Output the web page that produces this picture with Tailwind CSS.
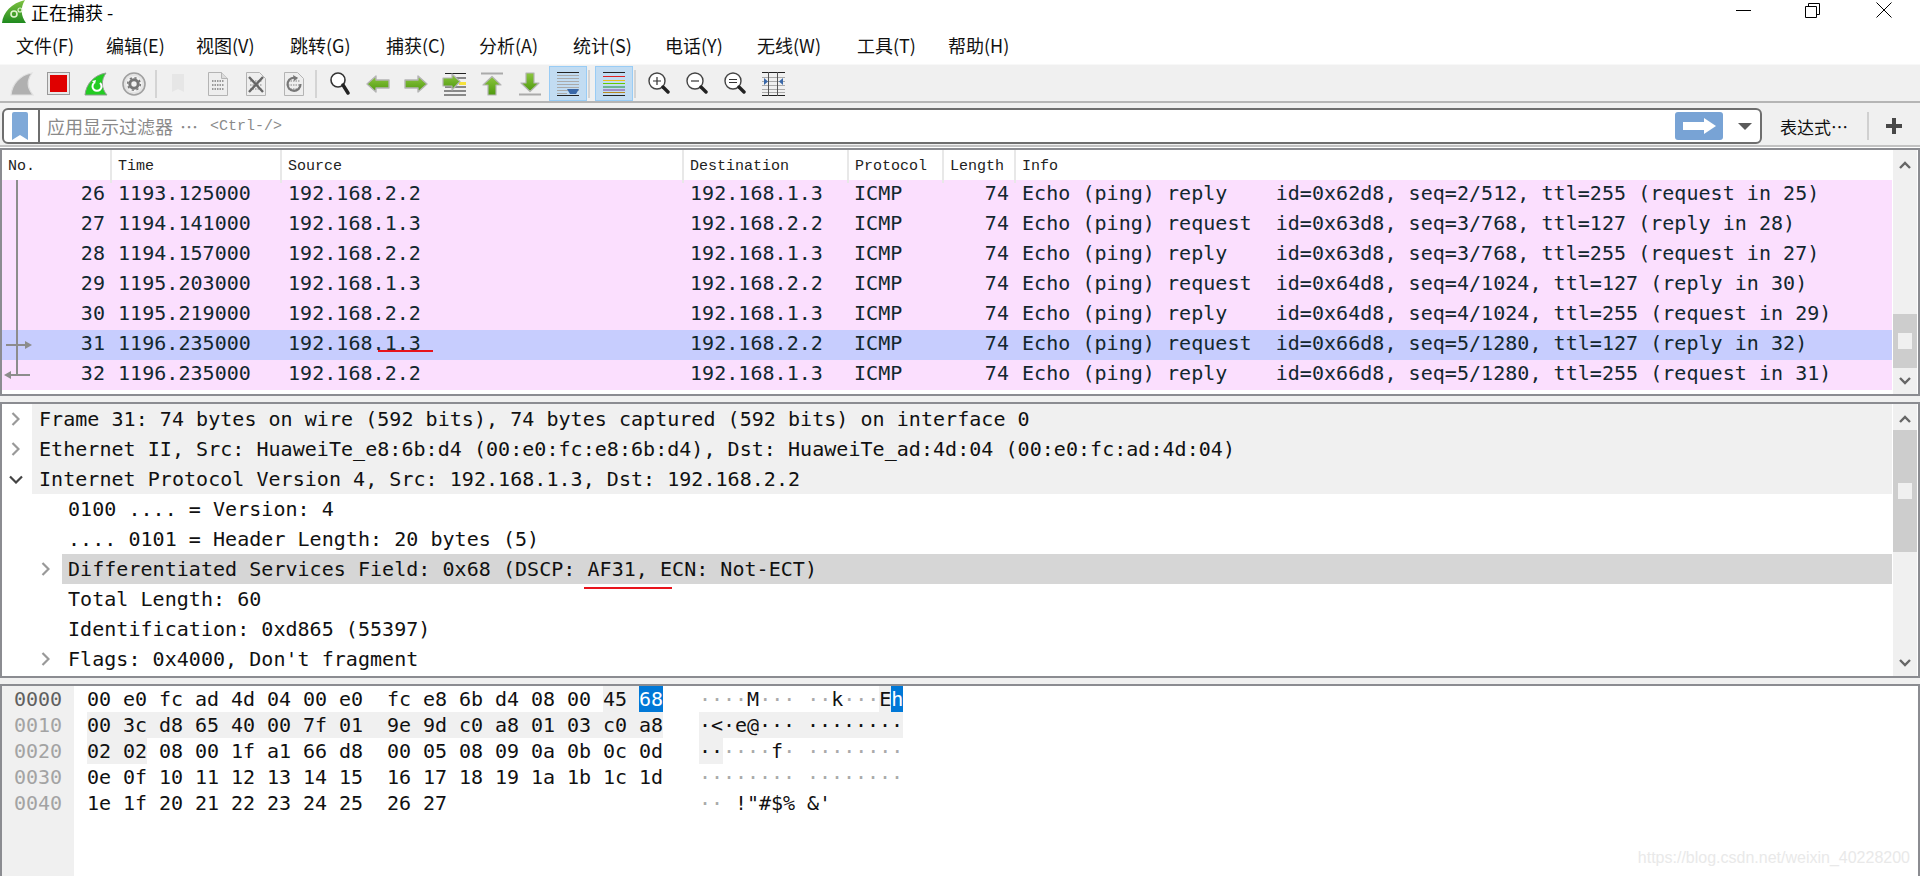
<!DOCTYPE html>
<html lang="zh">

<head>
    <meta charset="UTF-8">
    <title>正在捕获 -</title>
    <script src="https://cdn.jsdelivr.net/npm/@tailwindcss/browser@4"></script>
</head>

<body class="bg-white overflow-hidden">
    <div class="relative flex flex-col h-[876px] w-[1920px] overflow-hidden bg-white text-black font-['Noto_Sans_CJK_SC',sans-serif]">

        <!-- title bar -->
        <div class="flex items-start h-[28px] shrink-0">
            <svg class="ml-[2px] w-[24px] h-[24px]" viewBox="0 0 24 24">
                <defs>
                    <linearGradient id="logoFill" x1="0" y1="0" x2="0" y2="1">
                        <stop offset="0" stop-color="#7fc241" />
                        <stop offset="1" stop-color="#1f8a1f" />
                    </linearGradient>
                    <linearGradient id="arrowFill" x1="0" y1="0" x2="0" y2="1">
                        <stop offset="0" stop-color="#8cc63f" />
                        <stop offset="1" stop-color="#4f9a0f" />
                    </linearGradient>
                </defs>
                <path d="M0 23 C1 12 10 3 23 0 C18 8 19 16 24 23 Z" fill="url(#logoFill)" />
                <circle cx="12" cy="14" r="3" fill="none" stroke="#dff3cf" stroke-width="1.6" />
                <circle cx="18" cy="10" r="2" fill="none" stroke="#dff3cf" stroke-width="1.2" />
            </svg>
            <span class="ml-[5px] text-[18px] leading-[24px]">正在捕获 -</span>
            <div class="ml-auto flex items-start h-full">
                <svg class="w-[15px] h-[15px] mt-[3px] mr-[54px]" viewBox="0 0 15 15"><path d="M0 7.500H15" stroke="#000" fill="none" /></svg>
                <svg class="w-[15px] h-[15px] mt-[3px] mr-[56px]" viewBox="0 0 15 15"><path d="M.5 3.500h11v11H.5zM3.500 3V.5h11v11H12" stroke="#000" fill="none" /></svg>
                <svg class="w-[16px] h-[16px] mt-[2px] mr-[28px]" viewBox="0 0 16 16"><path d="M.5.5l15 15M15.500.5l-15 15" stroke="#000" fill="none" /></svg>
            </div>
        </div>

        <!-- menu bar -->
        <div class="flex items-center h-[35px] pl-[16px] pb-[1px] shrink-0 text-[18px] leading-none text-[#111]">
            <span class="w-[90px] shrink-0">文件(F)</span>
            <span class="w-[90px] shrink-0">编辑(E)</span>
            <span class="w-[94px] shrink-0">视图(V)</span>
            <span class="w-[96px] shrink-0">跳转(G)</span>
            <span class="w-[93px] shrink-0">捕获(C)</span>
            <span class="w-[94px] shrink-0">分析(A)</span>
            <span class="w-[92px] shrink-0">统计(S)</span>
            <span class="w-[92px] shrink-0">电话(Y)</span>
            <span class="w-[100px] shrink-0">无线(W)</span>
            <span class="w-[91px] shrink-0">工具(T)</span>
            <span class="shrink-0">帮助(H)</span>
        </div>

        <!-- main toolbar -->
        <div class="flex items-center h-[39px] mt-[1px] pl-[4px] pt-[1px] shrink-0 bg-[#f0f0f0] border-t border-t-[#f8f8f8] border-b-2 border-b-[#b5b5b5]">
            <span class="flex items-center justify-center w-[36px] h-full">
                <svg class="w-[24px] h-[24px]" viewBox="0 0 24 24"><path d="M1 23 C2 12 10 3 22 1 C17 8 17 16 23 23 Z" fill="#b0b0b0" stroke="#e0e0e0" stroke-width="1.2" /></svg>
            </span>
            <span class="flex items-center justify-center w-[36px] h-full">
                <svg class="w-[23px] h-[23px]" viewBox="0 0 23 23"><rect x=".5" y=".5" width="22" height="22" fill="#e8e8e8" stroke="#999" /><rect x="3" y="3" width="17" height="17" fill="#e00000" /></svg>
            </span>
            <span class="flex items-center justify-center w-[38px] h-full ml-[1px]">
                <svg class="w-[24px] h-[24px]" viewBox="0 0 24 24"><path d="M1 23 C2 12 10 3 22 1 C17 8 17 16 23 23 Z" fill="#22cc22" stroke="#8f9f8f" stroke-width="1" /><path d="M16 11 A4.500 4.500 0 1 1 10 11" fill="none" stroke="#fff" stroke-width="2" /><path d="M8 9l4-1-1 4z" fill="#fff" /></svg>
            </span>
            <span class="flex items-center justify-center w-[38px] h-full">
                <svg class="w-[24px] h-[24px]" viewBox="0 0 24 24"><circle cx="12" cy="12" r="11" fill="#e4e4e4" stroke="#a0a0a0" stroke-width="1.6" /><circle cx="12" cy="12" r="8" fill="#f2f2f2" /><circle cx="12" cy="12" r="4.200" fill="none" stroke="#777" stroke-width="3" /><circle cx="12" cy="12" r="6.300" fill="none" stroke="#777" stroke-width="1.6" stroke-dasharray="2.2 2.7" /></svg>
            </span>
            <span class="w-[2px] h-[28px] ml-[2px] mr-[3px] bg-[#d4d4d4]"></span>
            <span class="flex items-center justify-center w-[38px] h-full">
                <svg class="w-[16px] h-[24px]" viewBox="0 0 16 24"><path d="M1 2h12v18l-6-3-6 3z" fill="#e6e6e6" /></svg>
            </span>
            <span class="flex items-center justify-center w-[38px] h-full ml-[1px]">
                <svg class="w-[20px] h-[24px]" viewBox="0 0 20 24"><path d="M.5.5h13l6 6v17H.5z" fill="#eee" stroke="#b4b4b4" /><path d="M13.500.5v6h6" fill="#dcdcdc" stroke="#b4b4b4" /><path d="M4 9h12M4 13h12M4 17h12" stroke="#999" stroke-width="2" stroke-dasharray="1.5 1" fill="none" /></svg>
            </span>
            <span class="flex items-center justify-center w-[38px] h-full">
                <svg class="w-[20px] h-[24px]" viewBox="0 0 20 24"><path d="M.5.5h13l6 6v17H.5z" fill="#eee" stroke="#b4b4b4" /><path d="M4 9h12M4 13h12M4 17h12" stroke="#b8b8b8" stroke-width="2" stroke-dasharray="1.5 1" fill="none" /><path d="M3 5l14 15M17 5L3 20" stroke="#666" stroke-width="2.4" fill="none" /></svg>
            </span>
            <span class="flex items-center justify-center w-[38px] h-full">
                <svg class="w-[20px] h-[24px]" viewBox="0 0 20 24"><path d="M.5.5h13l6 6v17H.5z" fill="#eee" stroke="#b4b4b4" /><path d="M4 9h12M4 13h12M4 17h12" stroke="#b8b8b8" stroke-width="2" stroke-dasharray="1.5 1" fill="none" /><path d="M13 6.500A6.500 6.500 0 1 0 16.500 12" fill="none" stroke="#777" stroke-width="2.2" /><path d="M9 3l5 3-4 3z" fill="#777" /></svg>
            </span>
            <span class="w-[2px] h-[28px] ml-[2px] mr-[4px] bg-[#d4d4d4]"></span>
            <span class="flex items-center justify-center w-[38px] h-full">
                <svg class="w-[20px] h-[24px]" viewBox="0 0 20 24"><circle cx="8" cy="8" r="7" fill="#fff" stroke="#333" stroke-width="1.6" /><path d="M13 13l5 8" stroke="#222" stroke-width="3.4" stroke-linecap="round" /></svg>
            </span>
            <span class="flex items-center justify-center w-[38px] h-full">
                <svg class="w-[24px] h-[20px]" viewBox="0 0 24 20"><path d="M1 10L10 2v4h13v8H10v4z" fill="url(#arrowFill)" stroke="#b4b4b4" stroke-width="1.4" stroke-linejoin="round" /></svg>
            </span>
            <span class="flex items-center justify-center w-[38px] h-full">
                <svg class="w-[24px] h-[20px]" viewBox="0 0 24 20"><path d="M23 10L14 2v4H1v8h13v4z" fill="url(#arrowFill)" stroke="#b4b4b4" stroke-width="1.4" stroke-linejoin="round" /></svg>
            </span>
            <span class="flex items-center justify-center w-[38px] h-full">
                <svg class="w-[24px] h-[24px]" viewBox="0 0 24 24"><path d="M3 1.500h21M10 6h14M15 10.500h9M3 15h21M2 19h22M2 23h22" stroke="#222" stroke-width="1.2" fill="none" /><path d="M17 10h7v3h-7z" fill="#f6e23c" /><path d="M18 9.500L10 2v4H1v8h9v4z" fill="url(#arrowFill)" stroke="#b4b4b4" stroke-width="1.2" stroke-linejoin="round" /></svg>
            </span>
            <span class="flex items-center justify-center w-[38px] h-full">
                <svg class="w-[22px] h-[24px]" viewBox="0 0 22 24"><path d="M0 1.500h22" stroke="#aaa" stroke-width="2" /><path d="M11 4.500L2 13h5v10h8V13h5z" fill="url(#arrowFill)" stroke="#b4b4b4" stroke-width="1.2" stroke-linejoin="round" /></svg>
            </span>
            <span class="flex items-center justify-center w-[38px] h-full">
                <svg class="w-[22px] h-[24px]" viewBox="0 0 22 24"><path d="M0 22.500h22" stroke="#aaa" stroke-width="2" /><path d="M11 19.500L2 11h5V1h8v10h5z" fill="url(#arrowFill)" stroke="#b4b4b4" stroke-width="1.2" stroke-linejoin="round" /></svg>
            </span>
            <span class="flex items-center justify-center w-[38px] h-full bg-[#c2dcf2] border border-[#99ccf5]">
                <svg class="w-[22px] h-[24px]" viewBox="0 0 22 24"><path d="M0 .5h22M0 23.500h22" stroke="#222" /><path d="M0 3.500h22M0 6.500h22M0 9.500h22M0 12.500h22M0 15.500h22M0 18.500h22M0 21.500h10" stroke="#aaa" /><path d="M10 17h12l-3 5h-6z" fill="#3a68a8" /></svg>
            </span>
            <span class="w-[2px] h-[28px] ml-[1px] mr-[5px] bg-[#d4d4d4]"></span>
            <span class="flex items-center justify-center w-[38px] h-full bg-[#c2dcf2] border border-[#99ccf5]">
                <svg class="w-[22px] h-[24px]" viewBox="0 0 22 24"><path d="M0 .5h22" stroke="#222" /><path d="M0 4.500h22" stroke="#e02020" /><path d="M0 8.500h22" stroke="#e8c020" /><path d="M0 11.500h22" stroke="#66cc00" /><path d="M0 15h22" stroke="#1c8c30" /><path d="M0 18h22" stroke="#8040a0" /><path d="M0 20.500h22" stroke="#b88820" /><path d="M0 23.500h22" stroke="#222" /></svg>
            </span>
            <span class="w-[2px] h-[28px] ml-[1px] mr-[4px] bg-[#d4d4d4]"></span>
            <span class="flex items-center justify-center w-[38px] h-full">
                <svg class="w-[22px] h-[24px]" viewBox="0 0 22 24"><circle cx="9" cy="9" r="8" fill="#fff" stroke="#444" stroke-width="1.4" /><path d="M5 9h8M9 5v8" stroke="#333" stroke-width="1.2" /><path d="M15 15l5 5" stroke="#222" stroke-width="3.4" stroke-linecap="round" /></svg>
            </span>
            <span class="flex items-center justify-center w-[38px] h-full">
                <svg class="w-[22px] h-[24px]" viewBox="0 0 22 24"><circle cx="9" cy="9" r="8" fill="#fff" stroke="#444" stroke-width="1.4" /><path d="M5 9h8" stroke="#333" stroke-width="1.2" /><path d="M15 15l5 5" stroke="#222" stroke-width="3.4" stroke-linecap="round" /></svg>
            </span>
            <span class="flex items-center justify-center w-[38px] h-full">
                <svg class="w-[22px] h-[24px]" viewBox="0 0 22 24"><circle cx="9" cy="9" r="8" fill="#fff" stroke="#444" stroke-width="1.4" /><path d="M5 7.500h8M5 10.500h8" stroke="#333" stroke-width="1.2" /><path d="M15 15l5 5" stroke="#222" stroke-width="3.4" stroke-linecap="round" /></svg>
            </span>
            <span class="flex items-center justify-center w-[38px] h-full">
                <svg class="w-[23px] h-[24px]" viewBox="0 0 23 24"><path d="M0 .5h23M0 23.500h23" stroke="#222" /><path d="M0 5.500h23M0 9.500h23M0 13.500h23M0 17.500h23M0 20.500h23" stroke="#aaa" /><path d="M6.500 0v24M15.500 0v24" stroke="#555" /><path d="M2 6l4 3.500-4 3.500zM21 6l-4 3.500 4 3.500z" fill="#3a68a8" /></svg>
            </span>
        </div>

        <!-- display filter bar -->
        <div class="flex items-center h-[44px] pl-[2px] pt-[4px] shrink-0 bg-[#f0f0f0] border-b-2 border-b-[#c2c2c2]">
            <div class="flex items-center w-[1760px] h-[36px] bg-white border-2 border-[#6e6e6e] rounded-[6px]">
                <svg class="ml-[8px] w-[16px] h-[28px]" viewBox="0 0 16 28"><path d="M0 2a2 2 0 0 1 2-2h12a2 2 0 0 1 2 2v26l-8-5-8 5z" fill="#7fa9d8" /></svg>
                <span class="w-[2px] h-[32px] ml-[10px] bg-[#6e6e6e]"></span>
                <span class="ml-[7px] text-[18px] leading-none text-[#8a8a8a]">应用显示过滤器</span>
                <span class="ml-[7px] text-[18px] leading-none text-[#8a8a8a]">…</span>
                <span class="ml-[12px] text-[15px] leading-none text-[#8a8a8a] font-['Liberation_Mono',monospace]">&lt;Ctrl-/&gt;</span>
                <span class="ml-auto flex items-center justify-center w-[48px] h-[28px] bg-[#78a3d5] rounded-[3px]">
                    <svg class="w-[33px] h-[16px]" viewBox="0 0 33 16"><path d="M0 4h21V0l12 8-12 8v-4H0z" fill="#fff" /></svg>
                </span>
                <svg class="ml-[15px] mr-[8px] w-[14px] h-[7px]" viewBox="0 0 14 7"><path d="M0 0h14L7 7z" fill="#5a5a5a" /></svg>
            </div>
            <span class="ml-[18px] text-[17px] leading-none text-[#111]">表达式…</span>
            <span class="w-[2px] h-[28px] ml-[19px] bg-[#d0d0d0]"></span>
            <svg class="ml-[17px] w-[16px] h-[16px]" viewBox="0 0 16 16"><path d="M6 0h4v6h6v4h-6v6H6v-6H0V6h6z" fill="#484848" /></svg>
        </div>

        <!-- packet list -->
        <div class="flex h-[248px] mt-[1px] shrink-0 bg-white border-2 border-[#8b8c91] font-['DejaVu_Sans_Mono',monospace]">
            <div class="relative w-[1890px] shrink-0 text-[20px] tracking-[0.04px] text-[#12272e]">
                <div class="grid grid-cols-[110px_170px_402px_165px_95px_72px_1fr] h-[30px] leading-[33px] text-[15px] tracking-normal text-[#222] font-['Liberation_Mono',monospace]">
                    <span class="pl-[6px] border-r-2 border-r-[#e8e8e8]">No.</span>
                    <span class="pl-[6px] border-r-2 border-r-[#e8e8e8]">Time</span>
                    <span class="pl-[6px] border-r-2 border-r-[#e8e8e8]">Source</span>
                    <span class="pl-[6px] border-r-2 border-r-[#e8e8e8]">Destination</span>
                    <span class="pl-[6px] border-r-2 border-r-[#e8e8e8]">Protocol</span>
                    <span class="pl-[6px] border-r-2 border-r-[#e8e8e8]">Length</span>
                    <span class="pl-[6px]">Info</span>
                </div>
                <div class="grid grid-cols-[109px_170px_402px_165px_95px_72px_1fr] h-[30px] leading-[27px] whitespace-pre bg-[#fbdffe]">
                    <span class="text-right pr-[6px]">26</span><span class="pl-[7px]">1193.125000</span><span class="pl-[7px]">192.168.2.2</span><span class="pl-[7px]">192.168.1.3</span><span class="pl-[6px]">ICMP</span><span class="text-right pr-[6px]">74</span><span class="pl-[7px]">Echo (ping) reply    id=0x62d8, seq=2/512, ttl=255 (request in 25)</span>
                </div>
                <div class="grid grid-cols-[109px_170px_402px_165px_95px_72px_1fr] h-[30px] leading-[27px] whitespace-pre bg-[#fbdffe]">
                    <span class="text-right pr-[6px]">27</span><span class="pl-[7px]">1194.141000</span><span class="pl-[7px]">192.168.1.3</span><span class="pl-[7px]">192.168.2.2</span><span class="pl-[6px]">ICMP</span><span class="text-right pr-[6px]">74</span><span class="pl-[7px]">Echo (ping) request  id=0x63d8, seq=3/768, ttl=127 (reply in 28)</span>
                </div>
                <div class="grid grid-cols-[109px_170px_402px_165px_95px_72px_1fr] h-[30px] leading-[27px] whitespace-pre bg-[#fbdffe]">
                    <span class="text-right pr-[6px]">28</span><span class="pl-[7px]">1194.157000</span><span class="pl-[7px]">192.168.2.2</span><span class="pl-[7px]">192.168.1.3</span><span class="pl-[6px]">ICMP</span><span class="text-right pr-[6px]">74</span><span class="pl-[7px]">Echo (ping) reply    id=0x63d8, seq=3/768, ttl=255 (request in 27)</span>
                </div>
                <div class="grid grid-cols-[109px_170px_402px_165px_95px_72px_1fr] h-[30px] leading-[27px] whitespace-pre bg-[#fbdffe]">
                    <span class="text-right pr-[6px]">29</span><span class="pl-[7px]">1195.203000</span><span class="pl-[7px]">192.168.1.3</span><span class="pl-[7px]">192.168.2.2</span><span class="pl-[6px]">ICMP</span><span class="text-right pr-[6px]">74</span><span class="pl-[7px]">Echo (ping) request  id=0x64d8, seq=4/1024, ttl=127 (reply in 30)</span>
                </div>
                <div class="grid grid-cols-[109px_170px_402px_165px_95px_72px_1fr] h-[30px] leading-[27px] whitespace-pre bg-[#fbdffe]">
                    <span class="text-right pr-[6px]">30</span><span class="pl-[7px]">1195.219000</span><span class="pl-[7px]">192.168.2.2</span><span class="pl-[7px]">192.168.1.3</span><span class="pl-[6px]">ICMP</span><span class="text-right pr-[6px]">74</span><span class="pl-[7px]">Echo (ping) reply    id=0x64d8, seq=4/1024, ttl=255 (request in 29)</span>
                </div>
                <div class="grid grid-cols-[109px_170px_402px_165px_95px_72px_1fr] h-[30px] leading-[27px] whitespace-pre bg-[#c7cdfe]">
                    <span class="text-right pr-[6px]">31</span><span class="pl-[7px]">1196.235000</span><span class="pl-[7px]">192.168.1.3</span><span class="pl-[7px]">192.168.2.2</span><span class="pl-[6px]">ICMP</span><span class="text-right pr-[6px]">74</span><span class="pl-[7px]">Echo (ping) request  id=0x66d8, seq=5/1280, ttl=127 (reply in 32)</span>
                </div>
                <div class="grid grid-cols-[109px_170px_402px_165px_95px_72px_1fr] h-[30px] leading-[27px] whitespace-pre bg-[#fbdffe]">
                    <span class="text-right pr-[6px]">32</span><span class="pl-[7px]">1196.235000</span><span class="pl-[7px]">192.168.2.2</span><span class="pl-[7px]">192.168.1.3</span><span class="pl-[6px]">ICMP</span><span class="text-right pr-[6px]">74</span><span class="pl-[7px]">Echo (ping) reply    id=0x66d8, seq=5/1280, ttl=255 (request in 31)</span>
                </div>
                <!-- conversation arrows over the No. column -->
                <svg class="absolute left-0 top-[30px] w-[40px] h-[210px]" viewBox="0 0 40 210">
                    <path d="M15 0V196" stroke="#8c8c8c" stroke-width="2" fill="none" />
                    <path d="M4 165H24M4 195H28" stroke="#8c8c8c" stroke-width="2" fill="none" />
                    <path d="M23 161l7 4-7 4zM9 191l-7 4 7 4z" fill="#8c8c8c" />
                </svg>
                <!-- red hand-drawn marks from the screenshot -->
                <span class="absolute left-[376px] top-[200px] w-[55px] h-[2px] bg-[#e8141c]"></span>
            </div>
            <div class="relative w-[24px] ml-[1px] shrink-0 bg-[#f0f0f0]">
                <svg class="absolute left-[6px] top-[11px] w-[12px] h-[8px]" viewBox="0 0 12 8"><path d="M1 7l5-5 5 5" stroke="#666" stroke-width="2.4" fill="none" /></svg>
                <div class="absolute left-0 top-[164px] w-[24px] h-[54px] flex items-center justify-center bg-[#cdcdcd]">
                    <span class="w-[14px] h-[16px] bg-[#f0f0f0]"></span>
                </div>
                <svg class="absolute left-[6px] top-[227px] w-[12px] h-[8px]" viewBox="0 0 12 8"><path d="M1 1l5 5 5-5" stroke="#666" stroke-width="2.4" fill="none" /></svg>
            </div>
        </div>

        <div class="h-[6px] shrink-0 bg-[#f0f0f0]"></div>

        <!-- packet details -->
        <div class="flex h-[276px] shrink-0 border-2 border-[#8b8c91] text-[20px] tracking-[0.04px] leading-[31px] text-[#111] font-['DejaVu_Sans_Mono',monospace]">
            <div class="relative w-[1890px] shrink-0">
                <div class="flex h-[30px]">
                    <span class="flex items-center w-[30px] pl-[9px]"><svg class="w-[9px] h-[14px]" viewBox="0 0 9 14"><path d="M1.500 1l6 6-6 6" stroke="#999" stroke-width="2.2" fill="none" /></svg></span>
                    <span class="flex-1 pl-[7px] whitespace-pre bg-[#f0f0f0]">Frame 31: 74 bytes on wire (592 bits), 74 bytes captured (592 bits) on interface 0</span>
                </div>
                <div class="flex h-[30px]">
                    <span class="flex items-center w-[30px] pl-[9px]"><svg class="w-[9px] h-[14px]" viewBox="0 0 9 14"><path d="M1.500 1l6 6-6 6" stroke="#999" stroke-width="2.2" fill="none" /></svg></span>
                    <span class="flex-1 pl-[7px] whitespace-pre bg-[#f0f0f0]">Ethernet II, Src: HuaweiTe_e8:6b:d4 (00:e0:fc:e8:6b:d4), Dst: HuaweiTe_ad:4d:04 (00:e0:fc:ad:4d:04)</span>
                </div>
                <div class="flex h-[30px]">
                    <span class="flex items-center w-[30px] pl-[7px]"><svg class="w-[14px] h-[9px]" viewBox="0 0 14 9"><path d="M1 1.500l6 6 6-6" stroke="#444" stroke-width="2.2" fill="none" /></svg></span>
                    <span class="flex-1 pl-[7px] whitespace-pre bg-[#f0f0f0]">Internet Protocol Version 4, Src: 192.168.1.3, Dst: 192.168.2.2</span>
                </div>
                <div class="h-[30px] pl-[66px] whitespace-pre">0100 .... = Version: 4</div>
                <div class="h-[30px] pl-[66px] whitespace-pre">.... 0101 = Header Length: 20 bytes (5)</div>
                <div class="flex h-[30px]">
                    <span class="flex items-center w-[60px] pl-[39px]"><svg class="w-[9px] h-[14px]" viewBox="0 0 9 14"><path d="M1.500 1l6 6-6 6" stroke="#999" stroke-width="2.2" fill="none" /></svg></span>
                    <span class="flex-1 pl-[6px] whitespace-pre bg-[#d6d6d6]">Differentiated Services Field: 0x68 (DSCP: AF31, ECN: Not-ECT)</span>
                </div>
                <div class="h-[30px] pl-[66px] whitespace-pre">Total Length: 60</div>
                <div class="h-[30px] pl-[66px] whitespace-pre">Identification: 0xd865 (55397)</div>
                <div class="flex h-[30px]">
                    <span class="flex items-center w-[60px] pl-[39px]"><svg class="w-[9px] h-[14px]" viewBox="0 0 9 14"><path d="M1.500 1l6 6-6 6" stroke="#999" stroke-width="2.2" fill="none" /></svg></span>
                    <span class="flex-1 pl-[6px] whitespace-pre">Flags: 0x4000, Don't fragment</span>
                </div>
                <span class="absolute left-[582px] top-[183px] w-[88px] h-[2px] bg-[#e8141c]"></span>
            </div>
            <div class="relative w-[24px] ml-[1px] shrink-0 bg-[#f0f0f0]">
                <svg class="absolute left-[6px] top-[11px] w-[12px] h-[8px]" viewBox="0 0 12 8"><path d="M1 7l5-5 5 5" stroke="#666" stroke-width="2.4" fill="none" /></svg>
                <div class="absolute left-0 top-[26px] w-[24px] h-[122px] flex items-center justify-center bg-[#cdcdcd]">
                    <span class="w-[14px] h-[16px] bg-[#f0f0f0]"></span>
                </div>
                <svg class="absolute left-[6px] top-[255px] w-[12px] h-[8px]" viewBox="0 0 12 8"><path d="M1 1l5 5 5-5" stroke="#666" stroke-width="2.4" fill="none" /></svg>
            </div>
        </div>

        <div class="h-[6px] shrink-0 bg-[#f0f0f0]"></div>

        <!-- packet bytes -->
        <div class="flex flex-1 border-2 border-b-0 border-[#8b8c91] text-[20px] tracking-[-0.04px] leading-[26px] text-[#111] font-['DejaVu_Sans_Mono',monospace]">
            <div class="w-[72px] shrink-0 pl-[12px] bg-[#f0f0f0] text-[#a3a3a3]">
                <div class="text-[#606060]">0000</div>
                <div>0010</div>
                <div>0020</div>
                <div>0030</div>
                <div>0040</div>
            </div>
            <div class="pl-[13px]">
                <div class="h-[26px] whitespace-pre">00 e0 fc ad 4d 04 00 e0  fc e8 6b d4 08 00 <span class="inline-block bg-[#f0f0f0]">45 </span><span class="inline-block bg-[#0078d7] text-white">68</span>   <span class="text-[#aaa]">····</span>M<span class="text-[#aaa]">···</span> <span class="text-[#aaa]">··</span>k<span class="text-[#aaa]">···</span><span class="inline-block bg-[#f0f0f0]">E</span><span class="inline-block bg-[#0078d7] text-white">h</span></div>
                <div class="h-[26px] whitespace-pre"><span class="inline-block bg-[#f0f0f0]">00 3c d8 65 40 00 7f 01  9e 9d c0 a8 01 03 c0 a8</span>   <span class="inline-block bg-[#f0f0f0]">·&lt;·e@··· ········</span></div>
                <div class="h-[26px] whitespace-pre"><span class="inline-block bg-[#f0f0f0]">02 02</span> 08 00 1f a1 66 d8  00 05 08 09 0a 0b 0c 0d   <span class="inline-block bg-[#f0f0f0]">··</span><span class="text-[#aaa]">····</span>f<span class="text-[#aaa]">· ········</span></div>
                <div class="h-[26px] whitespace-pre">0e 0f 10 11 12 13 14 15  16 17 18 19 1a 1b 1c 1d   <span class="text-[#aaa]">········ ········</span></div>
                <div class="h-[26px] whitespace-pre">1e 1f 20 21 22 23 24 25  26 27                     <span class="text-[#aaa]">··</span> !"#$% &amp;'</div>
            </div>
        </div>

        <!-- image watermark -->
        <span class="absolute right-[10px] bottom-[10px] text-[16px] leading-none text-[#e9e9e9] font-['Liberation_Sans',sans-serif]">https://blog.csdn.net/weixin_40228200</span>
    </div>
</body>

</html>
